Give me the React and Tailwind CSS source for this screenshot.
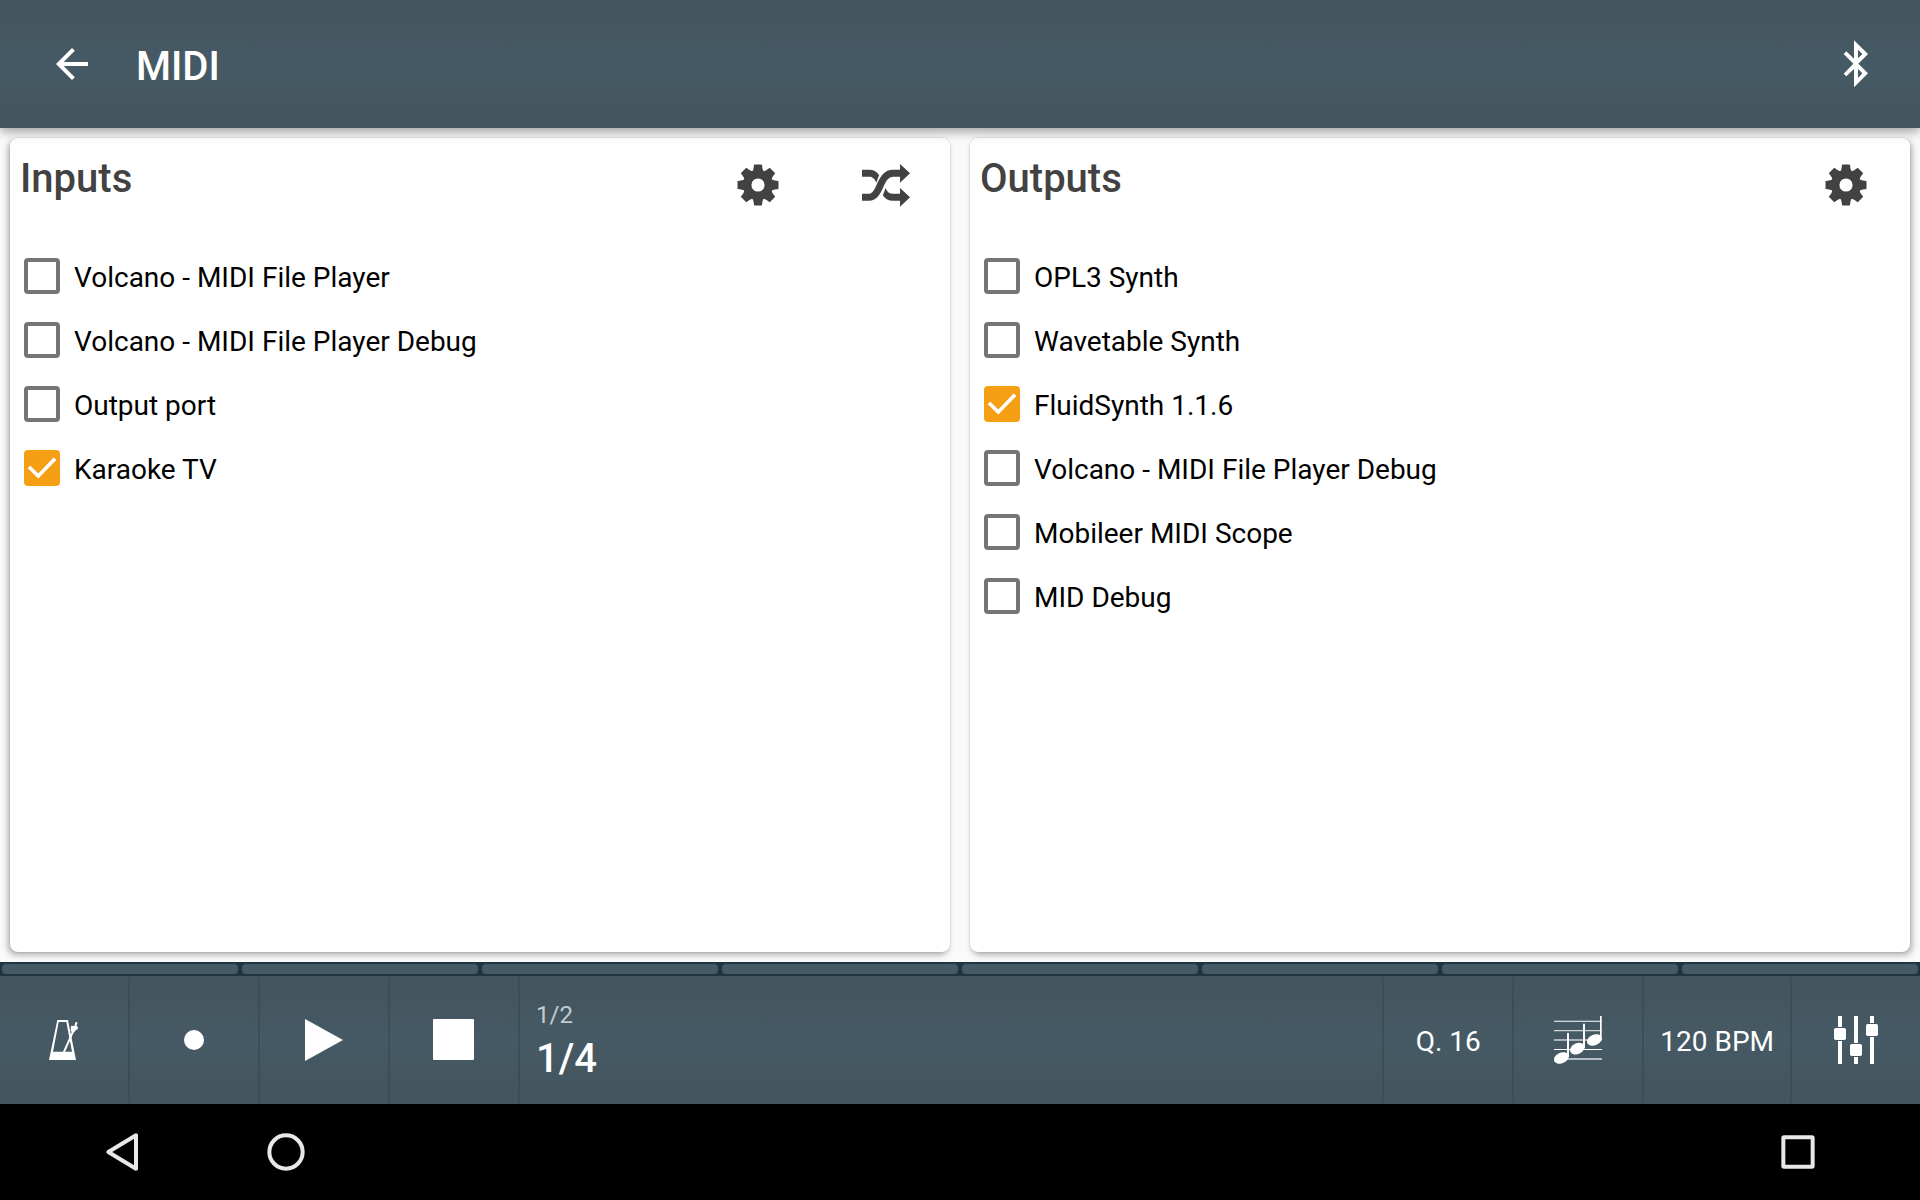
import React from "react";
import { MdArrowBack } from "react-icons/md";

const INPUTS = [
  { name: "Volcano - MIDI File Player" },
  { name: "Volcano - MIDI File Player Debug" },
  { name: "Output port" },
  { name: "Karaoke TV", checked: true },
];

const OUTPUTS = [
  { name: "OPL3 Synth" },
  { name: "Wavetable Synth" },
  { name: "FluidSynth 1.1.6", checked: true },
  { name: "Volcano - MIDI File Player Debug" },
  { name: "Mobileer MIDI Scope" },
  { name: "MID Debug" },
];

const BEATS = [1, 2, 3, 4, 5, 6, 7, 8];

function Icon({ children, viewBox = "0 0 144 144" }) {
  return (
    <svg viewBox={viewBox} className="size-12 shrink-0" fill="currentColor" aria-hidden="true">
      {children}
    </svg>
  );
}

function BluetoothIcon() {
  return (
    <Icon>
      <path
        fillRule="evenodd"
        d="M66 1L108 42L79 71L108 100L66 142V87L43 109L35 101L64 71L35 42L43 34L66 56ZM78 29V55L91 42ZM78 87V114L91 100Z"
      />
    </Icon>
  );
}

function GearIcon() {
  return (
    <Icon viewBox="-24 -24 48 48">
      <circle r="10.7" fill="none" stroke="currentColor" strokeWidth="8.2" />
      {[0, 45, 90, 135, 180, 225, 270, 315].map((a) => (
        <path
          key={a}
          transform={`rotate(${a})`}
          d="M-6 -13Q-4.6 -15 -4.4 -17L-4 -20.1Q-4 -20.5 -3.5 -20.5H3.5Q4 -20.5 4 -20.1L4.4 -17Q4.6 -15 6 -13Z"
        />
      ))}
    </Icon>
  );
}

function ShuffleIcon() {
  return (
    <Icon viewBox="0 0 48 48">
      <path d="M0 36.3H7C19 36.3 17 12.3 31 12.3H39" fill="none" stroke="currentColor" strokeWidth="7" />
      <path d="M38 3L48 12.3L38 21.7ZM38 27L48 36.3L38 45.7Z" />
      <path d="M0 8.8H7C11.5 8.8 14.5 10.5 17.2 14.2C16 16.5 15.2 19 14.5 21.7C12.5 17.5 10.5 15.8 7 15.8H0Z" />
      <path d="M39 39.8H31C26.5 39.8 23.5 38 20.8 34.3C22 31.8 22.7 29.5 23.4 27C25 31 27.5 32.8 31 32.8H39Z" />
    </Icon>
  );
}

function MetronomeIcon() {
  return (
    <Icon>
      <path
        fillRule="evenodd"
        d="M52 12H84L108 132H27ZM56 18L39 107H96L79 18Z"
      />
      <path d="M71 110L106 31" fill="none" stroke="currentColor" strokeWidth="6" />
      <path d="M107 17L113 20L109 29L114 33L113 40L108 42L100 51L92 45L93 29L103 30Z" />
    </Icon>
  );
}

function NotesIcon() {
  return (
    <Icon>
      <path d="M0 14H144V17H0Z" />
      <path d="M0 42H144V46H0Z" opacity="0.75" />
      <path d="M0 69H144V75H0Z" opacity="0.55" />
      <path d="M0 99H144V102H0Z" />
      <path d="M24 126H144V132H24Z" opacity="0.6" />
      <path d="M39 51H45V124H39ZM87 23H93V96H87ZM138 0H143V72H138Z" />
      <ellipse rx="23" ry="16" transform="translate(22 126) rotate(-25)" />
      <ellipse rx="23" ry="16" transform="translate(70 98) rotate(-25)" />
      <ellipse rx="23" ry="16" transform="translate(121 72) rotate(-25)" />
    </Icon>
  );
}

function MixerIcon() {
  return (
    <Icon>
      <path d="M18 0H30V33H18ZM18 75H30V144H18ZM66 0H78V81H66ZM66 123H78V144H66ZM114 0H126V21H114ZM114 63H126V144H114Z" />
      <rect x="6" y="36" width="36" height="36" rx="5" />
      <rect x="54" y="84" width="36" height="36" rx="5" />
      <rect x="102" y="24" width="36" height="36" rx="5" />
    </Icon>
  );
}

function PortItem({ name, checked }) {
  return (
    <li>
      <label className="flex h-16 items-center gap-3.5 pl-3.5">
        <span className="grid size-9 shrink-0">
          <input
            type="checkbox"
            defaultChecked={checked}
            className="peer col-start-1 row-start-1 size-9 appearance-none rounded border-4 border-[#757575] checked:border-[#f59f14] checked:bg-[#f59f14]"
          />
          <svg
            viewBox="0 0 108 108"
            className="pointer-events-none col-start-1 row-start-1 hidden size-9 text-white peer-checked:block"
            aria-hidden="true"
          >
            <path d="M15 51L43 78L93 26" fill="none" stroke="currentColor" strokeWidth="11" />
          </svg>
        </span>
        <span className="pt-1 text-[28px] leading-8 text-black">{name}</span>
      </label>
    </li>
  );
}

function PortCard({ title, ports, side, children }) {
  return (
    <section
      className={
        side === "left"
          ? "flex-1 rounded-lg bg-white shadow-[-2px_3px_6px_rgba(0,0,0,0.3),0_0_2px_rgba(0,0,0,0.18)]"
          : "flex-1 rounded-lg bg-white shadow-[2px_3px_6px_rgba(0,0,0,0.3),0_0_2px_rgba(0,0,0,0.18)]"
      }
    >
      <div className="flex h-[106px] items-start rounded-t-lg bg-linear-to-b from-[#f7f7f7] to-white to-[8px] pl-2.5 text-[#424242]">
        <h2 className="flex-1 pt-4 text-[40px] leading-[50px] font-medium">{title}</h2>
        {children}
      </div>
      <ul>
        {ports.map((p) => (
          <PortItem key={p.name} {...p} />
        ))}
      </ul>
    </section>
  );
}

function CardButton({ label, children }) {
  return (
    <button type="button" aria-label={label} className="flex h-[94px] w-32 items-center justify-center">
      {children}
    </button>
  );
}

function BarButton({ label, side, children }) {
  return (
    <button
      type="button"
      aria-label={label}
      className={
        side === "left"
          ? "flex w-[130px] items-center justify-center border-r-2 border-[#3b4d57]"
          : "flex min-w-[130px] items-center justify-center border-l-2 border-[#3b4d57] px-4 text-[28px] leading-8"
      }
    >
      {children}
    </button>
  );
}

export default function App() {
  return (
    <div className="flex min-h-screen flex-col bg-[#fafafa] font-[Roboto,sans-serif]">
      <header className="flex h-32 items-center bg-linear-to-b from-[#42545d] via-[#465a65] to-[#42545d] px-10 text-white shadow-[0_4px_10px_rgba(0,0,0,0.35)]">
        <button type="button" aria-label="Back" className="px-2">
          <MdArrowBack className="size-12" />
        </button>
        <h1 className="flex-1 pt-1.5 pl-8 text-[40px] leading-[48px] font-medium">MIDI</h1>
        <button type="button" aria-label="Bluetooth">
          <BluetoothIcon />
        </button>
      </header>

      <main className="flex flex-1 gap-5 p-2.5">
        <PortCard title="Inputs" ports={INPUTS} side="left">
          <CardButton label="Input settings">
            <GearIcon />
          </CardButton>
          <CardButton label="Shuffle inputs">
            <ShuffleIcon />
          </CardButton>
        </PortCard>
        <PortCard title="Outputs" ports={OUTPUTS} side="right">
          <CardButton label="Output settings">
            <GearIcon />
          </CardButton>
        </PortCard>
      </main>

      <footer>
        <div className="grid h-3.5 grid-cols-8 bg-[#1d3641]">
          {BEATS.map((b) => (
            <div key={b} className="m-0.5 rounded bg-[#465a65]" />
          ))}
        </div>

        <div className="flex h-32 bg-linear-to-b from-[#42545d] via-[#465a65] to-[#42545d] text-white">
          <BarButton side="left" label="Metronome">
            <MetronomeIcon />
          </BarButton>
          <BarButton side="left" label="Record">
            <Icon>
              <circle cx="72" cy="72" r="30" />
            </Icon>
          </BarButton>
          <BarButton side="left" label="Play">
            <Icon>
              <path d="M15 9L129 72L15 135Z" />
            </Icon>
          </BarButton>
          <BarButton side="left" label="Stop">
            <Icon>
              <rect x="9" y="9" width="123" height="123" rx="3" />
            </Icon>
          </BarButton>
          <div className="flex flex-1 flex-col justify-center gap-1.5 pt-1 pl-4">
            <div className="text-2xl leading-7 text-white/70">1/2</div>
            <div className="text-[40px] leading-[48px] font-medium">1/4</div>
          </div>
          <BarButton side="right">
            <span className="pt-1">Q. 16</span>
          </BarButton>
          <BarButton side="right" label="Notes">
            <NotesIcon />
          </BarButton>
          <BarButton side="right">
            <span className="pt-1">120 BPM</span>
          </BarButton>
          <BarButton side="right" label="Mixer">
            <MixerIcon />
          </BarButton>
        </div>

        <nav className="flex h-24 items-center bg-black px-[98px] text-[#e8e8e8]">
          <button type="button" aria-label="System back">
            <Icon>
              <path
                d="M31 72L114 22V122Z"
                fill="none"
                stroke="currentColor"
                strokeWidth="12"
                strokeLinejoin="round"
              />
            </Icon>
          </button>
          <button type="button" aria-label="Home" className="ml-[116px]">
            <Icon>
              <circle cx="72" cy="72" r="50" fill="none" stroke="currentColor" strokeWidth="12" />
            </Icon>
          </button>
          <button type="button" aria-label="Recent apps" className="ml-auto">
            <Icon>
              <rect x="28" y="28" width="88" height="88" rx="2" fill="none" stroke="currentColor" strokeWidth="12" strokeLinejoin="round" />
            </Icon>
          </button>
        </nav>
      </footer>
    </div>
  );
}
